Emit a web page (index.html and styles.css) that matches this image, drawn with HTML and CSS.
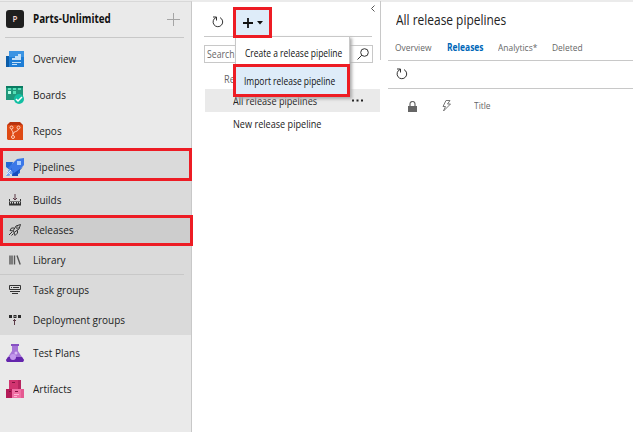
FILE: index.html
```html
<!DOCTYPE html>
<html lang="en">
<head>
<meta charset="utf-8">
<title>All release pipelines</title>
<link rel="stylesheet" href="styles.css">
</head>
<body>
<div class="app">
  <nav class="sidebar">
    <div class="project"><span class="avatar">P</span><span class="label name">Parts-Unlimited</span>
      <svg class="add" width="13" height="13" viewBox="0 0 13 13"><path d="M0 6.5h13M6.5 0v13" stroke="#a5a5a5"/></svg></div>
    <a class="item"><svg class="icon" viewBox="0 0 18 18"><path fill="#0b5ca8" d="M0 6h5v11H0z"/><path fill="#1f7ed6" d="M3 1h15v16H3z"/><path fill="#3b94e3" d="M3 1h15v6H3z"/><path fill="#c4e0f7" d="M6 8h3v2H6zM9 6h3v4H9zM12 4h3v6h-3zM6 12h9v1H6zM6 14h5v1H6z"/></svg><span class="label">Overview</span></a>
    <a class="item"><svg class="icon" viewBox="0 0 18 18"><path fill="#20987c" d="M0 0h17v14H0z"/><path fill="#087b61" d="M0 0h17v2H0z"/><path fill="#55dfb7" d="M2 2h3v2H2zM7 2h3v2H7zM12 2h3v2h-3zM7 5h3v3H7z"/><path fill="#b8ffe7" d="M2 5h3v3H2z"/><circle cx="13" cy="13" r="5" fill="#13bfa3"/><path d="m10 13 2 2 4-4" fill="none" stroke="#fff" stroke-width="1.500"/></svg><span class="label">Boards</span></a>
    <a class="item"><svg class="icon" viewBox="0 0 18 18"><path fill="#b83410" d="M4 0h10l3 3v3H1V3z"/><path fill="#df4b15" d="M1 3h16v15H2L1 17z"/><g fill="none" stroke="#ffd2bd"><circle cx="5.500" cy="5.500" r="1.500"/><circle cx="12.500" cy="5.500" r="1.500"/><circle cx="7" cy="15" r="1.500"/><path d="M5.500 7c0 2 1.500 2 1.500 4v2.500M12.500 7c0 3-5.500 2-5.500 5"/></g></svg><span class="label">Repos</span></a>
    <div class="group">
      <a class="item marked"><svg class="icon" viewBox="0 0 18 18"><path fill="#2368d5" d="M0 4h7L4 12 0 9zM6 14l8-4v5l-5 3H6z"/><path fill="#3c78e8" d="m2 10 9-9 7-1v7l-9 10z"/><path fill="#174cba" d="m5 11 3 3-2 4h6v-4l5-5-9 6-3-5z"/><path fill="#a9cdff" d="M11 3h4v4h-4z"/><path fill="#79a7ef" d="m3 11 4 4-4 3H0z"/><path d="m0 12 5 5M0 17l5-5" stroke="#d9e8ff"/></svg><span class="label">Pipelines</span></a>
      <a class="item sub"><svg class="icon small" viewBox="0 0 12 12"><path d="M.5 5v6M2.500 7v4M4.500 8v3M7.500 8v3M9.500 7v4M11.500 5v6" stroke="#333"/><path d="M0 7.500h12" stroke="#777"/><path d="M0 9.500h12v2H0z" fill="#333"/><path d="M6 0v6M4 4l2 2 2-2" fill="none" stroke="#5a3945"/></svg><span class="label">Builds</span></a>
      <a class="item sub marked current"><svg class="icon small" viewBox="0 0 12 12"><path d="M4 7 7 2l4.500-1.500L10 5 5 8.500zM5 4H2.500L1 6.500l3 .5M8.500 6.500V9L6 11.500 5 8.500M3 8l-3 3M4.500 9.500l-2 2" fill="none" stroke="#333"/><circle cx="8.300" cy="3.800" r="1" fill="none" stroke="#444" stroke-width=".8"/></svg><span class="label">Releases</span></a>
      <a class="item sub"><svg class="icon small" viewBox="0 0 12 12"><path d="M1 1.500v9M3 1.500v9M5.500 1.500v9M8 1.500l3.200 9" fill="none" stroke="#555" stroke-width="1.400"/></svg><span class="label">Library</span></a>
      <div class="rule"></div>
      <a class="item sub"><svg class="icon small" viewBox="0 0 12 12"><path d="M.5 1.500h11v4H.5zM2 3.500h1M4 3.500h6M1 7.500h10M3 9.500h6" fill="none" stroke="#333"/></svg><span class="label">Task groups</span></a>
      <a class="item sub"><svg class="icon small" viewBox="0 0 12 12"><path d="M0 1h3v3H0zM4.500 1h3v3h-3zM9 1h3v3H9z" fill="#292929"/><path d="M5.500 2h1v1h-1z" fill="#ddd"/><path d="M5.500 5v6M4 7l1.500-1.500L7 7" fill="none" stroke="#5a3945"/></svg><span class="label">Deployment groups</span></a>
    </div>
    <a class="item"><svg class="icon" viewBox="0 0 18 18"><path fill="#a675d7" d="M6 1h6v6l6 9-1 2H1l-1-2 6-9z"/><path fill="#6426ac" d="M2 13h14l2 3-1 2H1l-1-2z"/><path fill="#8751c2" d="M5 0h8v2H5z"/><circle cx="7" cy="13" r="3" fill="#c397ed"/><circle cx="10" cy="9" r="1.500" fill="#d7b9f5"/></svg><span class="label">Test Plans</span></a>
    <a class="item"><svg class="icon" viewBox="0 0 18 18"><path fill="#d13470" d="M3 0h12v9H3z"/><path fill="#b72560" d="M12 0h3v9h-3z"/><path fill="#b41b58" d="M0 9h6v9H0z"/><path fill="#f06fa4" d="M6 9h9v9H6z"/><path fill="#e45a91" d="M15 9h3v9h-3z"/><path stroke="#811340" d="M6 2.500h3M3 11.500h2M9 11.500h3"/><path stroke="#ffb4d1" d="M8 14.500h5M8 16.500h3"/></svg><span class="label">Artifacts</span></a>
  </nav>

  <section class="pane">
    <svg class="collapse" width="4" height="7" viewBox="0 0 4 7"><path d="M3.500.5l-3 3 3 3" fill="none" stroke="#555"/></svg>
    <div class="tools">
      <svg class="refresh" width="12" height="12" viewBox="0 0 12 12"><path d="M1 1h3.500v3.500M4 1.500A4.800 4.800 0 1 0 8 1.600" fill="none" stroke="#333"/></svg>
      <button class="new"><svg width="20" height="10" viewBox="0 0 20 10"><path d="M0 5h10M5 0v10" stroke="#111" stroke-width="1.800"/><path d="M14 3h6l-3 3.500z" fill="#111"/></svg></button>
    </div>
    <div class="search"><span class="label">Search</span><svg width="12" height="12" viewBox="0 0 12 12"><circle cx="7.500" cy="4.500" r="3.800" fill="none" stroke="#333"/><path d="M4.800 7.200.5 11.500" stroke="#333"/></svg></div>
    <div class="heading"><span class="label">Re</span></div>
    <div class="row selected"><span class="label">All release pipelines</span><svg width="11" height="3" viewBox="0 0 11 3"><path d="M0 .5h2v2H0zM4.500.5h2v2h-2zM9 .5h2v2H9z" fill="#222"/></svg></div>
    <div class="row"><span class="label">New release pipeline</span></div>
    <div class="menu">
      <div class="option"><span class="label">Create a release pipeline</span></div>
      <div class="option active"><span class="label">Import release pipeline</span></div>
    </div>
  </section>

  <main class="main">
    <div class="head">
      <h1><span class="label">All release pipelines</span></h1>
      <div class="tabs"><span class="label">Overview</span><span class="label chosen">Releases</span><span class="label">Analytics*</span><span class="label">Deleted</span></div>
    </div>
    <div class="bar"><svg class="refresh" width="12" height="12" viewBox="0 0 12 12"><path d="M1 1h3.500v3.500M4 1.500A4.800 4.800 0 1 0 8 1.600" fill="none" stroke="#333"/></svg></div>
    <div class="columns">
      <svg width="9" height="11" viewBox="0 0 9 11"><path d="M2 5V3a2.500 2.500 0 0 1 5 0v2" fill="none" stroke="#666" stroke-width="1.200"/><path d="M0 5h9v6H0z" fill="#666"/></svg>
      <svg width="9" height="12" viewBox="0 0 9 12"><path d="M4 .5h4L5.500 4h3L1.500 11l2-4.500H1z" fill="none" stroke="#777"/></svg>
      <span class="label">Title</span>
    </div>
  </main>
</div>
</body>
</html>
```
FILE: styles.css
```css
*, *::after { box-sizing: border-box; }
body { margin: 0; background: #fff; color: #222; font: 11.5px/16px "Open Sans", "Noto Sans", sans-serif; overflow: hidden; }
svg { display: block; flex: none; }
.label { display: block; width: max-content; transform: scaleX(.868); transform-origin: left; }
.app { display: flex; height: 432px; padding-top: 1px; box-shadow: inset 0 2px #ebebeb; white-space: nowrap; }
.sidebar { width: 192px; flex: none; background: #eaeaea; border-right: 1px solid #c8c8c8; border-top: 1px solid #d8d8d8; }
.project { display: flex; align-items: center; height: 36px; margin: 0 7px 3px 5px; padding: 0 4px 1px 1px; border-bottom: 1px solid #c8c8c8; }
.avatar { width: 18px; height: 18px; margin-right: 9px; border-radius: 3px; background: #1f1f1f; color: #f4d8d2; font-size: 8px; font-weight: 600; line-height: 18px; text-align: center; }
.name { font-weight: 700; color: #111; transform: scaleX(.855); }
.add { margin-left: auto; }
.item { display: flex; align-items: center; height: 36px; padding-left: 6px; position: relative; }
.icon { width: 18px; height: 18px; margin-right: 9px; }
.group { background: #dadada; }
.sub { height: 30px; padding-left: 9px; }
.small { width: 12px; height: 12px; margin-right: 12px; }
.current { background: #cdcdcd; }
.marked { z-index: 1; }
.marked::after { content: ""; position: absolute; left: 0; top: -1px; width: 192px; height: 33px; border: 3px solid #ed1c24; }
.current::after { top: 0; width: 193px; height: 31px; }
.rule { height: 1px; margin: -1px 7px 0 0; background: #c8c8c8; }
.pane { width: 188px; flex: none; padding-left: 12px; position: relative; font-size: 10.5px; }
.collapse { position: absolute; left: 179px; top: 4px; }
.tools { display: flex; align-items: center; width: 168px; height: 36px; border-bottom: 1px solid #c8c8c8; padding: 6px 0 0 8px; }
.new { width: 39px; height: 31px; margin: 0 0 -2px 9px; padding: 0 0 0 7px; border: 3px solid #ed1c24; background: #deecf9; position: relative; z-index: 3; }
.search { display: flex; align-items: center; justify-content: space-between; width: 169px; height: 18px; margin-top: 8px; padding: 0 3px 0 2px; border: 1px solid #c8c8c8; color: #666; font-size: 10px; }
.heading { margin: 8px 0 2px 20px; height: 16px; color: #666; }
.row { display: flex; align-items: center; justify-content: space-between; height: 23px; margin-left: 1px; padding: 0 17px 0 28px; }
.selected { background: #eaeaea; }
.menu { position: absolute; left: 43px; top: 35px; width: 115px; height: 61px; background: #fff; border: 1px solid #c8c8c8; box-shadow: 2px 2px 3px #aaa; font-size: 10.2px; color: #111; }
.menu .label { transform: scaleX(.83); }
.option { height: 27px; display: flex; align-items: center; padding: 4px 0 0 9px; }
.active { height: 33px; width: 117px; margin-left: -3px; padding: 0 0 0 8px; border: 3px solid #ed1c24; background: #deecf9; }
.main { flex: 1; min-width: 0; }
.head { height: 59px; border-left: 1px solid #c8c8c8; padding: 10px 0 0 15px; }
h1 { margin: 0; font-size: 14px; line-height: 18px; font-weight: 400; }
h1 .label { transform: scaleX(.853); }
.tabs { display: grid; grid-template-columns: 52px 51px 54px auto; margin: 11px 0 0 -1px; color: #666; font-size: 9.7px; line-height: 16px; }
.chosen { color: #0067b8; font-weight: 700; }
.bar { height: 29px; margin-left: 8px; padding: 7px 0 0 8px; border: solid #c8c8c8; border-width: 1px 0; }
.columns { display: flex; align-items: center; margin: 9px 0 0 28px; height: 16px; color: #666; font-size: 9.7px; }
.columns svg + svg { margin: 0 23px 0 25px; }
```
